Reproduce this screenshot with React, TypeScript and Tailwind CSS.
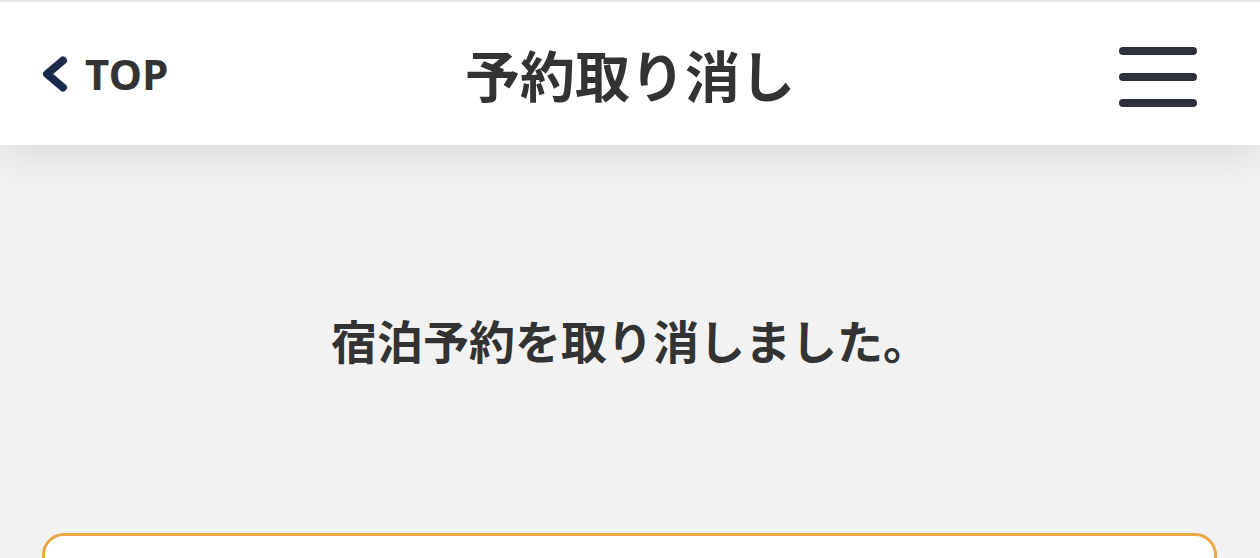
// ─── Header ───────────────────────────────────────────────────────────────────

function Header() {
  return (
    <header className="relative z-10 bg-white border-t-2 border-[#e4e4e4] shadow-[0_12px_36px_rgba(0,0,0,0.09)]">
      <div className="h-[143px] grid grid-cols-[1fr_auto_1fr] items-center px-[42px]">
        <a href="#" className="flex items-center gap-[17px] text-[#333333]">
          <svg width="26" height="36" viewBox="0 0 26 36" aria-hidden="true">
            <polyline
              points="21,4.5 5,18 21,31.5"
              fill="none"
              stroke="#1c2b4b"
              strokeWidth="8"
              strokeLinecap="round"
              strokeLinejoin="round"
            />
          </svg>
          <span className="text-[42px] font-bold leading-none tracking-[0.3px]">TOP</span>
        </a>
        <h1 className="text-[55px] font-bold leading-none text-[#333333] pt-[4px]">予約取り消し</h1>
        <button className="justify-self-end mr-[21px] mt-[6px] flex flex-col gap-[18px]" aria-label="メニュー">
          <span className="block w-[78px] h-[8px] rounded-full bg-[#2e303d]" />
          <span className="block w-[78px] h-[8px] rounded-full bg-[#2e303d]" />
          <span className="block w-[78px] h-[8px] rounded-full bg-[#2e303d]" />
        </button>
      </div>
    </header>
  );
}

export default function App() {
  return (
    <div
      className="h-[558px] overflow-hidden bg-[#f2f2f2]"
      style={{ fontFamily: '"Noto Sans", "Noto Sans CJK JP", sans-serif' }}
    >
      <Header />
      <main className="pt-[173px]">
        <p className="text-center text-[46px] font-bold leading-[46px] text-[#333333]">
          宿泊予約を取り消しました。
        </p>
        <section className="mt-[169px] ml-[42px] mr-[43px] h-[220px] bg-white border-[3px] border-[#e9a845] rounded-[22px]" />
      </main>
    </div>
  );
}
